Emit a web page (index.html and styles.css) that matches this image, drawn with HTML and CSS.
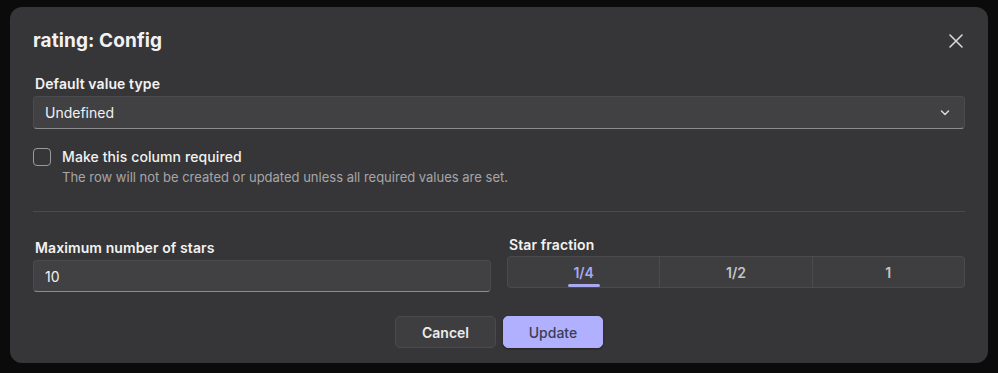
FILE: index.html
```html
<!DOCTYPE html>
<html lang="en">
<head>
    <meta charset="UTF-8">
    <meta name="viewport" content="width=device-width, initial-scale=1.0">
    <title>rating: Config</title>
    <link rel="stylesheet" href="styles.css">
</head>
<body>
    <div class="dialog">
        <div class="dialog-header">
            <h1>rating: Config</h1>
            <button class="close-btn" aria-label="Close">
                <svg width="16" height="16" viewBox="0 0 16 16"><path d="M2 2L14 14M14 2L2 14" stroke="#d8d8d8" stroke-width="1.6" stroke-linecap="round"/></svg>
            </button>
        </div>

        <div class="field">
            <label class="field-label">Default value type</label>
            <div class="select">
                <span>Undefined</span>
                <svg width="10" height="6" viewBox="0 0 10 6"><path d="M1.5 1L5 4.5L8.5 1" stroke="#d8d8d8" stroke-width="1.5" fill="none" stroke-linecap="round" stroke-linejoin="round"/></svg>
            </div>
        </div>

        <div class="check-row">
            <span class="checkbox"></span>
            <div>
                <div class="check-label">Make this column required</div>
                <div class="check-help">The row will not be created or updated unless all required values are set.</div>
            </div>
        </div>

        <hr class="divider">

        <div class="form-row">
            <div class="field col-left">
                <label class="field-label">Maximum number of stars</label>
                <div class="text-input">10</div>
            </div>
            <div class="field col-right">
                <label class="field-label tight">Star fraction</label>
                <div class="segmented">
                    <div class="segment active">1/4</div>
                    <div class="segment">1/2</div>
                    <div class="segment">1</div>
                </div>
            </div>
        </div>

        <div class="actions">
            <button class="btn btn-cancel">Cancel</button>
            <button class="btn btn-primary">Update</button>
        </div>
    </div>
</body>
</html>
```

FILE: styles.css
```css
body {
    margin: 0;
    background-color: #0b0b0c;
    font-family: Inter, "Noto Sans", sans-serif;
    color: #f2f2f2;
    width: 998px;
    height: 373px;
    overflow: hidden;
}
.dialog {
    margin: 7px 0 0 10px;
    width: 978px;
    height: 356px;
    box-sizing: border-box;
    background-color: #363638;
    border-radius: 12px;
    padding: 20px 23px 15px 23px;
    display: flex;
    flex-direction: column;
}
.dialog-header {
    display: flex;
    align-items: center;
    justify-content: space-between;
    height: 34px;
}
.dialog-header h1 {
    margin: 0;
    font-size: 19px;
    font-weight: 700;
    letter-spacing: 0.1px;
}
.close-btn {
    background: none;
    border: none;
    padding: 0;
    width: 16px;
    height: 16px;
    margin-right: 1px;
    margin-top: 1px;
    cursor: pointer;
}
.field {
    display: flex;
    flex-direction: column;
}
.dialog-header + .field {
    margin-top: 20px;
}
.field-label {
    font-size: 14px;
    font-weight: 600;
    line-height: 20px;
    margin: 0 2px 2px;
    letter-spacing: 0.1px;
}
.field-label.tight {
    margin-bottom: 1px;
}
.select, .text-input {
    height: 33px;
    box-sizing: border-box;
    background-color: #414143;
    border: 1px solid #4b4b4d;
    border-bottom-color: #8c8c8e;
    border-radius: 4px;
    padding: 0 11px;
    font-size: 14px;
    display: flex;
    align-items: center;
    justify-content: space-between;
}
.select svg {
    margin-right: 3px;
}
.text-input {
    height: 32px;
}
.check-row {
    display: flex;
    align-items: flex-start;
    gap: 11px;
    margin-top: 19px;
}
.checkbox {
    width: 18px;
    height: 18px;
    box-sizing: border-box;
    border: 1.5px solid #9a9a9c;
    border-radius: 4px;
    flex-shrink: 0;
}
.check-label {
    font-size: 14px;
    line-height: 18px;
    font-weight: 500;
    letter-spacing: 0.1px;
}
.check-help {
    font-size: 13px;
    line-height: 16px;
    color: #a6a6a8;
    margin-top: 3px;
}
.divider {
    border: none;
    border-top: 1px solid #4b4b4d;
    margin: 26px 0 0 0;
}
.form-row {
    display: flex;
    gap: 16px;
    margin-top: 23px;
}
.col-left {
    flex: 1;
    padding-top: 3px;
}
.col-right {
    flex: 1;
}
.segmented {
    display: flex;
    height: 32px;
    box-sizing: border-box;
    background-color: #3e3e40;
    border: 1px solid #4b4b4d;
    border-radius: 4px;
}
.segment {
    flex: 1;
    display: flex;
    align-items: center;
    justify-content: center;
    font-size: 14px;
    font-weight: 600;
    color: #c4c4c6;
    position: relative;
}
.segment + .segment {
    border-left: 1px solid #4b4b4d;
}
.segment.active {
    color: #a9a9f2;
}
.segment.active::after {
    content: "";
    position: absolute;
    left: 50%;
    bottom: 0;
    width: 32px;
    height: 3px;
    margin-left: -16px;
    background-color: #a9a9f2;
    border-radius: 2px;
}
.actions {
    display: flex;
    justify-content: center;
    gap: 7px;
    margin-top: 24px;
}
.btn {
    height: 32px;
    border-radius: 5px;
    font-family: Inter, "Noto Sans", sans-serif;
    font-size: 14px;
    cursor: pointer;
}
.btn-cancel {
    width: 101px;
    background-color: #3e3e40;
    border: 1px solid #4b4b4d;
    color: #ececec;
    font-weight: 600;
}
.btn-primary {
    width: 100px;
    background-color: #b0b0fe;
    border: 1px solid #b0b0fe;
    color: #3c3c52;
    font-weight: 500;
    box-shadow: 0 1px 2px rgba(0, 0, 0, 0.4);
}
```
